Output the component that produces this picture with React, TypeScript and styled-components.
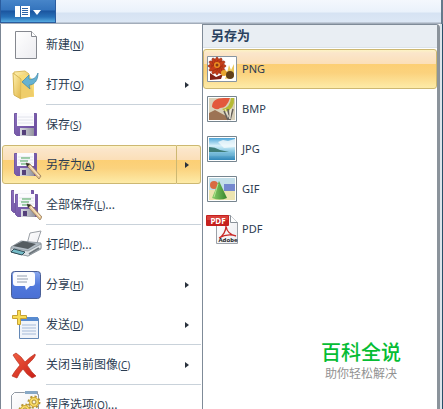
import React from "react";
import styled, { createGlobalStyle, css } from "styled-components";

const Global = createGlobalStyle`
  * { box-sizing: border-box; }
  body { margin: 0; background: #fff; overflow: hidden; }
  body, button { font-family: "Noto Sans", "Noto Sans CJK SC", sans-serif; color: #2b3c52; }
`;

const gold = css`
  background: linear-gradient(#fdf3c4 0, #fbe6cb 3px, #fbdfb8 37%, #fccf74 38%, #fbd27d 60%, #fdeba8 100%);
  border-color: #cdb872;
`;

const Window = styled.div`
  height: 100vh;
  overflow: hidden;
  display: flex;
  flex-direction: column;
`;

const TitleBar = styled.header`
  flex: none;
  height: 24px;
  display: flex;
  background: linear-gradient(#f4f8fd 0, #eaf2fb 12px, #d6e3f3 13px, #dce7f5 22px, #a3adba 23px);
  border-right: 2px solid #65798b;
`;

const AppButton = styled.button`
  width: 56px;
  height: 23px;
  padding: 0 0 0 14px;
  border: 1px solid #2b5c9e;
  border-top: 0;
  display: flex;
  align-items: center;
  background: linear-gradient(#4785c9 0, #3474bd 10px, #1b559f 11px, #2871b8 17px, #55aae0 100%);
`;

const Body = styled.div`
  flex: 1;
  min-height: 0;
  display: flex;
  align-items: stretch;
`;

const Menu = styled.nav`
  flex: none;
  width: 202px;
  padding: 1px 1px 0 1px;
  border-left: 1px solid #7b8694;
  overflow: hidden;
`;

const Entry = styled.div<{ $line?: boolean }>`
  height: 40px;
  display: flex;
  ${(p) => p.$line && css`
    background: linear-gradient(#c9d2da, #c9d2da) 44px 100% / 156px 1px no-repeat;
  `}
`;

const EntryButton = styled.button<{ $active?: boolean }>`
  flex: 1;
  min-width: 0;
  height: 39px;
  display: flex;
  align-items: center;
  gap: 4px;
  padding: 0 0 0 7px;
  border: 1px solid transparent;
  border-radius: 3px 0 0 3px;
  background: none;
  font-size: 12px;
  line-height: 18px;
  text-align: left;
  white-space: nowrap;
  ${(p) => p.$active && gold}
`;

const Arrow = styled.button<{ $active?: boolean }>`
  width: 24px;
  height: 39px;
  padding: 0 0 0 8px;
  border: 1px solid transparent;
  border-left: 0;
  border-radius: 0 3px 3px 0;
  background: none;
  display: flex;
  align-items: center;
  ${(p) => p.$active && gold}
`;

const Key = styled.span`
  font-size: 10px;
`;

const IconBox = styled.span`
  flex: none;
  width: 32px;
  height: 32px;
  svg { display: block; }
`;

const Panel = styled.section`
  flex: 1;
  min-width: 0;
  display: flex;
  flex-direction: column;
  border: 1px solid #7f8b98;
  border-right: 3px solid #8b939b;
  border-bottom: 0;
  border-radius: 0 4px 0 0;
`;

const PanelTitle = styled.h2`
  flex: none;
  margin: 0;
  height: 23px;
  padding-left: 8px;
  background: #e9eef3;
  border-bottom: 1px solid #dbe3ea;
  font-size: 13px;
  line-height: 20px;
  font-weight: 700;
  color: #2a4160;
`;

const Formats = styled.div`
  flex: none;
  padding-top: 1px;
`;

const Format = styled.button<{ $active?: boolean }>`
  width: 100%;
  height: 40px;
  display: flex;
  align-items: center;
  gap: 4px;
  padding: 0 2px;
  border: 1px solid transparent;
  border-radius: 3px;
  background: none;
  font-size: 11px;
  line-height: 16px;
  ${(p) => p.$active && gold}
`;

const Brand = styled.footer`
  margin: auto 0 27px;
  padding-right: 36px;
  align-self: flex-end;
  text-align: center;
  font-family: "Noto Sans CJK SC", sans-serif;
`;

const BrandName = styled.div`
  font-size: 20px;
  line-height: 24px;
  font-weight: 500;
  color: #06bd34;
`;

const BrandLine = styled.div`
  font-size: 12px;
  line-height: 18px;
  color: #929292;
`;

const Edge = styled.div`
  flex: none;
  width: 3px;
  border-left: 2px solid #dce5ec;
  background: #285069;
`;

const HiddenSvg = styled.svg`
  position: absolute;
`;

const Svg = ({ children }: { children: React.ReactNode }) => (
  <svg width="32" height="32" viewBox="0 0 32 32" aria-hidden="true">{children}</svg>
);

const Gradients = () => (
  <HiddenSvg width="0" height="0" aria-hidden="true">
    <defs>
      <linearGradient id="paper" x2="1" y2="1"><stop stopColor="#fff" /><stop offset="1" stopColor="#ececf0" /></linearGradient>
      <linearGradient id="folder" x2="1" y2="1"><stop stopColor="#fff1ac" /><stop offset="1" stopColor="#e0b548" /></linearGradient>
      <linearGradient id="violet" x2="1" y2="1"><stop stopColor="#8a6fbc" /><stop offset="1" stopColor="#67489a" /></linearGradient>
      <linearGradient id="metal" x2="1"><stop stopColor="#d9dae2" /><stop offset="1" stopColor="#92939e" /></linearGradient>
      <linearGradient id="blue" x2="0" y2="1"><stop stopColor="#8aa8ee" /><stop offset=".5" stopColor="#5179dc" /><stop offset="1" stopColor="#4a70d4" /></linearGradient>
      <linearGradient id="red" x2="1" y2="1"><stop stopColor="#f16143" /><stop offset="1" stopColor="#c91c15" /></linearGradient>
      <linearGradient id="sky" x2="0" y2="1"><stop stopColor="#4fa6d8" /><stop offset=".35" stopColor="#d6f0fa" /><stop offset=".6" stopColor="#8ccbe4" /><stop offset="1" stopColor="#2f86b8" /></linearGradient>
      <linearGradient id="cone" x2="1"><stop stopColor="#89cf6a" /><stop offset="1" stopColor="#36852c" /></linearGradient>
    </defs>
  </HiddenSvg>
);

const Disk = () => (
  <g>
    <path d="M.5.5h22v22h-20l-2-2z" fill="url(#violet)" stroke="#7358a3" />
    <path d="M3 0h17v13H3z" fill="#fbfbfe" />
    <path d="M4 4h15M4 7h15M4 10h15" stroke="#e2e4ec" />
    <path d="M6 15h14v8H6z" fill="url(#metal)" />
    <path d="M8 17h4v5H8z" fill="#54407a" />
  </g>
);

const Pencil = () => (
  <g>
    <path d="M12 10l4 1 11 12-2 3-11-12z" fill="#e6c596" stroke="#8a7050" strokeWidth=".7" />
    <path d="M12 10l1 4 3-3z" fill="#33332f" />
    <path d="M16 13l9 10" stroke="#fff0d4" />
  </g>
);

const Lines = () => <path d="M7 5h9M6 8h8M7 11h7" stroke="#48a35b" strokeWidth="1.2" />;

const icons: Record<string, React.ReactNode> = {
  new: <Svg><path d="M5.5 2.500h16l5 5V29.500h-21z" fill="url(#paper)" stroke="#85888f" /><path d="M21.500 2.500v5h5" fill="#fff" stroke="#85888f" /></Svg>,
  open: <Svg>
    <path d="M4 3l11-1 4 3v22H6l-2-3z" fill="url(#folder)" stroke="#dabb62" />
    <path d="M9 6h9l6 6v16H8z" fill="#f8dc79" />
    <path d="M3 4l8 6v20l-7-4z" fill="url(#folder)" stroke="#d6b555" />
    <path d="M12 11l9 3 3 13-13 3z" fill="#efcd6a" />
    <path d="M28 4c0 8-4 12-9 12l1 4-8-7 7-7v4c4 1 7-1 9-6z" fill="#66b2d2" stroke="#3c87ab" strokeWidth=".7" />
  </Svg>,
  save: <Svg><g transform="translate(4 4)"><Disk /></g></Svg>,
  saveAs: <Svg><g transform="translate(4 4)"><Disk /><Lines /><Pencil /></g></Svg>,
  saveAll: <Svg><g transform="translate(1 1)"><Disk /></g><g transform="translate(5 5)"><Disk /><Lines /><Pencil /></g></Svg>,
  print: <Svg>
    <path d="M17 15l3-11 11-2-5 15z" fill="url(#paper)" stroke="#9ba0a6" />
    <path d="M1 18l10-6 20 2v6L18 27 1 23z" fill="#b3bdc5" stroke="#848d94" strokeWidth=".8" />
    <path d="M3 17l10-5 13 3-8 5z" fill="#555c60" />
    <path d="M1 19l17 3 13-7v4L18 27 1 23z" fill="#dce2e5" stroke="#7b858c" strokeWidth=".6" />
    <path d="M4 20l11 3-3 3-11-3z" fill="#75bbc7" stroke="#314d58" />
    <path d="M19 25l10-6" stroke="#6d757b" strokeWidth="2" />
  </Svg>,
  share: <Svg>
    <rect x="1.500" y="2.500" width="29" height="27" rx="3" fill="url(#blue)" stroke="#4a5f96" />
    <path d="M6 3h16q3 0 3 3v8q0 3-3 3h-2l-4 4-1-4H6q-3 0-3-3V6q0-3 3-3z" fill="#fbfcff" />
    <path d="M7 7h10M7 10h11M7 13h10" stroke="#939eaf" />
  </Svg>,
  send: <Svg>
    <path d="M9.500 9.500h19v20h-19z" fill="#f0f4fa" stroke="#6488b6" /><path d="M17 8h11v4H10v-2z" fill="#588bd0" />
    <path d="M12 16h14M12 19h14M12 22h14M12 25h14" stroke="#a5bad8" />
    <path d="M7.500 1.500h3v5h6v3h-6v6h-3v-6h-5v-3h5z" fill="#f8dc55" stroke="#c6a135" />
  </Svg>,
  close: <Svg><path d="M6 4q5 3 9 9 5-5 10-8 2 2-8 11 5 8 9 11l-4 2q-5-3-9-9-4 4-6 9l-5-2q2-4 8-11Q6 11 3 6z" fill="url(#red)" stroke="#b9301f" strokeWidth=".7" /></Svg>,
  options: <Svg>
    <path d="M1.500 6.500l3-3h10l2-1h11v3h1v24h-27z" fill="url(#paper)" stroke="#929aa4" /><path d="M15 2h12v3H15z" fill="#87a8c5" />
    {[{ x: 24, y: 13 }, { x: 15, y: 21 }].map((p) => <g key={p.x}>
      <circle cx={p.x} cy={p.y} r="5" fill="#f6d86a" stroke="#b49434" strokeWidth="3" strokeDasharray="2 1.9" />
      <circle cx={p.x} cy={p.y} r="4.5" fill="#f9dc66" stroke="#d1ac3d" /><circle cx={p.x} cy={p.y} r="2" fill="#f8f3dd" stroke="#a98b36" />
    </g>)}
  </Svg>,
  png: <Svg>
    <path d="M1.500 3.500h29v25h-29z" fill="#fff" stroke="#8795a1" />
    {[0, 30, 60, 90, 120, 150].map((a) => <ellipse key={a} cx="11" cy="13" rx="9" ry="2.500" transform={`rotate(${a} 11 13)`} fill="#c53d18" stroke="#962a10" strokeWidth=".6" />)}
    <circle cx="11" cy="12" r="3" fill="#ed8e21" /><circle cx="11" cy="12" r="1.500" fill="#8a3a17" />
    <path d="M21 20l2-8 2 5 3-6v13l-9 2z" fill="#ecc95c" /><path d="M4 20l6 4 7-3-2 5-11 1z" fill="#842216" />
    <circle cx="18" cy="20" r="3" fill="#e7a530" /><circle cx="24" cy="22" r="4" fill="#61401a" />
  </Svg>,
  bmp: <Svg>
    <path d="M1.500 3.500h29v25h-29z" fill="#fff" stroke="#76858f" /><path d="M3 5h26v22H3z" fill="#d9d1b9" />
    <path d="M6 14q0-9 12-9h6q-3 10-10 10-3 3-8-1z" fill="#e3583c" /><path d="M16 16q8-1 9-11h3q1 10-8 14z" fill="#b5ba35" />
    <path d="M3 20l6-3 11 6 2 4H3z" fill="#9c7354" /><path d="M18 18l4 9M22 16l1 11M27 16l-3 11" stroke="#645f5a" strokeWidth="1.500" />
    <path d="M19 16l5 10M25 16l-1 10" stroke="#f9f6eb" strokeWidth=".8" />
  </Svg>,
  jpg: <Svg>
    <path d="M1.500 3.500h29v25h-29z" fill="#fff" stroke="#76858f" /><path d="M3 5h26v22H3z" fill="url(#sky)" />
    <path d="M12 9l5-2 5 1 7-2v8l-11 1z" fill="#f2fafd" opacity=".8" /><path d="M3 14q6 0 11 3l9 2H3z" fill="#3f7d78" />
    <path d="M3 22h26" stroke="#87c7dd" opacity=".5" />
  </Svg>,
  gif: <Svg>
    <path d="M1.500 3.500h29v25h-29z" fill="#fff" stroke="#76858f" /><path d="M3 5h26v12H3z" fill="#c3dfe9" /><path d="M3 17h26v10H3z" fill="#ece4b0" />
    <path d="M18 11h11v7H18z" fill="#7488cf" /><circle cx="8" cy="12" r="4" fill="#d96b41" />
    <path d="M13 8l8 17q-7 3-15 0z" fill="url(#cone)" /><path d="M12 11l-4 13" stroke="#b4e594" />
  </Svg>,
  pdf: <Svg>
    <path d="M10.500 2.500h14l7 7v21h-21z" fill="url(#paper)" stroke="#9ba1a8" /><path d="M24.500 2.500v7h7" fill="#fff" stroke="#899098" />
    <path d="M13 25c4-2 7-7 7-12 1 7 5 9 10 10-6-2-12-1-17 2z" fill="none" stroke="#c92a28" strokeWidth="1.300" />
    <rect y="2" width="23" height="11" rx="1" fill="#c5201e" /><path d="M1 3h21v4H1z" fill="#d9413c" />
    <text x="12" y="11" textAnchor="middle" fontSize="8" fontWeight="700" fill="#fff">PDF</text>
    <text x="22" y="29" textAnchor="middle" fontSize="6" fontWeight="700" fill="#222">Adobe</text>
  </Svg>,
};

const entries = [
  { icon: "new", label: "新建", k: "N" },
  { icon: "open", label: "打开", k: "O", arrow: true, line: true },
  { icon: "save", label: "保存", k: "S" },
  { icon: "saveAs", label: "另存为", k: "A", arrow: true, active: true },
  { icon: "saveAll", label: "全部保存", k: "L", dots: true, line: true },
  { icon: "print", label: "打印", k: "P", dots: true },
  { icon: "share", label: "分享", k: "H", arrow: true },
  { icon: "send", label: "发送", k: "D", arrow: true, line: true },
  { icon: "close", label: "关闭当前图像", k: "C", arrow: true, line: true },
  { icon: "options", label: "程序选项", k: "O", dots: true },
];

const formats = ["PNG", "BMP", "JPG", "GIF", "PDF"];

export default function App() {
  return (
    <Window>
      <Global />
      <Gradients />
      <TitleBar>
        <AppButton aria-label="菜单">
          <svg width="28" height="14" viewBox="0 0 28 14" aria-hidden="true">
            <path d="M0 2h15v11H0z" fill="#fff" /><path d="M5.500 2v11M7 4.500h6M7 6.500h6M7 8.500h6M7 10.500h6" stroke="#2c64a6" />
            <path d="M18 6h8l-4 5z" fill="#fff" />
          </svg>
        </AppButton>
      </TitleBar>
      <Body>
        <Menu>
          {entries.map((e) => (
            <Entry key={e.label} $line={e.line}>
              <EntryButton $active={e.active}>
                <IconBox>{icons[e.icon]}</IconBox>
                <span>{e.label}<Key>(<u>{e.k}</u>)</Key>{e.dots && "..."}</span>
              </EntryButton>
              {e.arrow && (
                <Arrow $active={e.active} aria-label={e.label}>
                  <svg width="4" height="6" aria-hidden="true"><path d="M0 0l4 3-4 3z" fill="#29313c" /></svg>
                </Arrow>
              )}
            </Entry>
          ))}
        </Menu>
        <Panel>
          <PanelTitle>另存为</PanelTitle>
          <Formats>
            {formats.map((f) => (
              <Format key={f} $active={f === "PNG"}>
                <IconBox>{icons[f.toLowerCase()]}</IconBox>
                <span>{f}</span>
              </Format>
            ))}
          </Formats>
          <Brand>
            <BrandName>百科全说</BrandName>
            <BrandLine>助你轻松解决</BrandLine>
          </Brand>
        </Panel>
        <Edge />
      </Body>
    </Window>
  );
}
